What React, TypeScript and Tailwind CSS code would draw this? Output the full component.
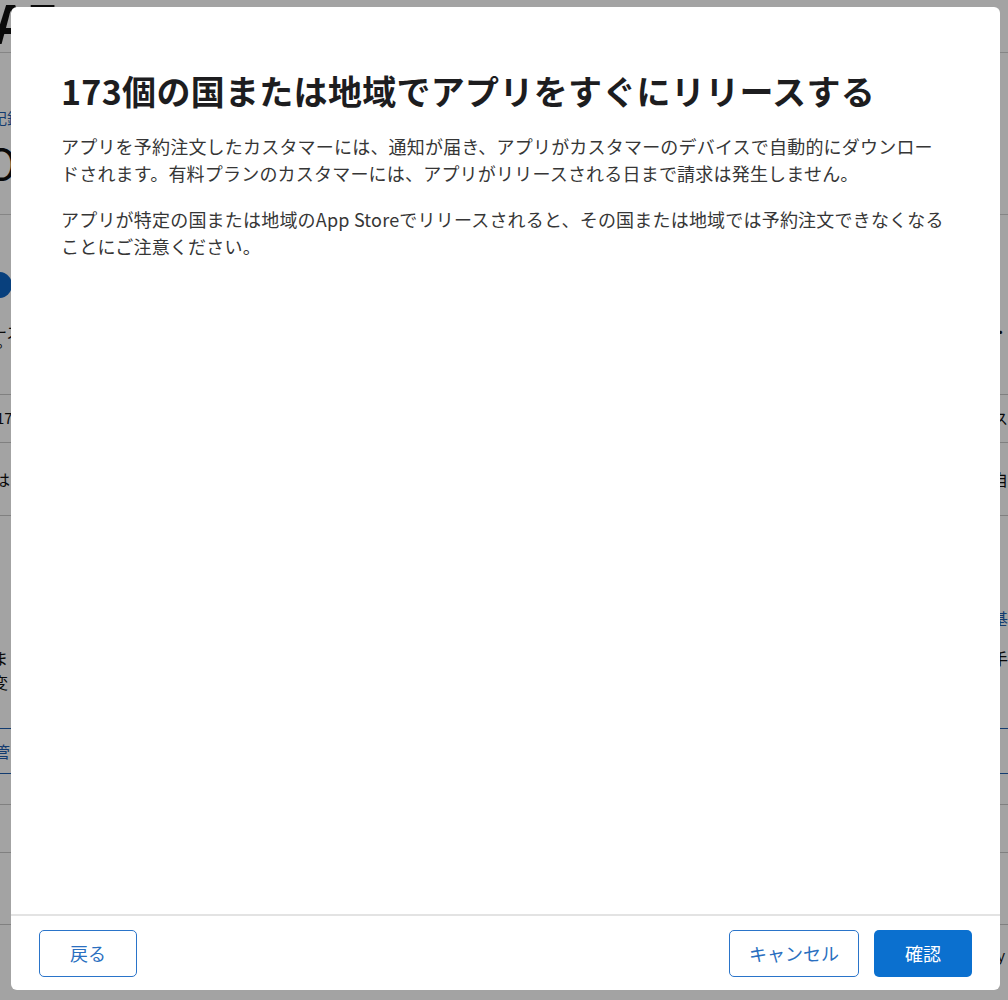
import React from "react";

const FONT = "font-['Noto_Sans_CJK_JP','Noto_Sans',sans-serif]";

function BgPage() {
  return (
    <div className="flex w-[1008px] flex-col bg-white text-[#111]">
      <div className="flex h-[53px] items-end justify-between border-b border-[#d0d0d0]">
        <div className="-mt-[20px] -ml-[6px] text-[52px] font-bold leading-[60px] tracking-tight">AF</div>
      </div>
      <div className="flex h-[162px] flex-col border-b border-[#d0d0d0]">
        <div className="mt-[56px] -ml-[8px] text-[15px] leading-[18px] text-[#1f5fb0]">記録</div>
        <div className="mt-[12px] -ml-[14px] text-[42px] leading-[46px]">O</div>
      </div>
      <div className="flex h-[179px] flex-col">
        <div className="mt-[57px] -ml-[14px] h-[26px] w-[26px] rounded-full bg-[#0d64c4]" />
        <div className="mt-[26px] flex justify-between">
          <span className="-ml-[8px] text-[15px] leading-[16px]">ース</span>
          <span className="text-[15px] leading-[16px]">・</span>
        </div>
        <div className="mt-[2px] -ml-[4px] text-[10px] leading-[12px] tracking-[3px]">P I</div>
      </div>
      <div className="flex h-[49px] items-center justify-between border-t border-b border-[#c8c8c8]">
        <span className="-ml-[4px] text-[15px]">17</span>
        <span className="text-[15px]">ス</span>
      </div>
      <div className="flex h-[73px] items-center justify-between border-b border-[#c8c8c8]">
        <span className="-ml-[6px] text-[16px]">は</span>
        <span className="text-[16px]">自</span>
      </div>
      <div className="flex h-[212px] flex-col">
        <div className="mt-[90px] flex justify-end">
          <span className="text-[16px] text-[#1f5fb0]">基</span>
        </div>
        <div className="mt-[16px] flex justify-between">
          <span className="-ml-[8px] text-[16px] leading-[24px]">ま</span>
          <span className="text-[16px] leading-[24px]">手</span>
        </div>
        <div className="-ml-[8px] text-[16px] leading-[24px]">変</div>
      </div>
      <div className="flex h-[46px] items-center border-y border-[#1f5fb0]">
        <span className="-ml-[6px] text-[16px] text-[#1f5fb0]">管</span>
      </div>
      <div className="h-[31px] border-b border-[#c8c8c8]" />
      <div className="h-[48px] border-b border-[#c8c8c8]" />
      <div className="h-[72px] border-b border-[#c8c8c8]" />
      <div className="flex h-[75px] justify-end">
        <span className="mt-[20px] text-[14px]">ｙ</span>
      </div>
    </div>
  );
}

export default function App() {
  return (
    <div className={`relative h-[1000px] w-[1008px] overflow-hidden ${FONT}`}>
      <BgPage />
      <div className="absolute inset-0 bg-black/[0.36]" />
      <div className="absolute left-[11px] top-[7px] flex h-[983px] w-[989px] flex-col rounded-[6px] bg-white">
        <div className="flex flex-1 flex-col pl-[50px] pr-[30px] pt-[64px]">
          <h1 className="text-[34px] font-bold leading-[40px] tracking-[0.3px] text-[#1d1d1f]">
            173個の国または地域でアプリをすぐにリリースする
          </h1>
          <p className="mt-[22px] text-[18px] leading-[27px] tracking-[0.2px] text-[#363636]">
            アプリを予約注文したカスタマーには、通知が届き、アプリがカスタマーのデバイスで自動的にダウンロー
            <br />
            ドされます。有料プランのカスタマーには、アプリがリリースされる日まで請求は発生しません。
          </p>
          <p className="mt-[19px] text-[18px] leading-[27px] tracking-[0.2px] text-[#363636]">
            アプリが特定の国または地域のApp Storeでリリースされると、その国または地域では予約注文できなくなる
            <br />
            ことにご注意ください。
          </p>
        </div>
        <div className="h-[2px] bg-[#e3e3e3]" />
        <div className="flex items-center justify-between px-[28px] pb-[13px] pt-[14px]">
          <button className="flex h-[47px] w-[98px] items-center justify-center rounded-[5px] border border-[#2a74c9] text-[18px] text-[#2a6fc0]">
            戻る
          </button>
          <div className="flex gap-[15px]">
            <button className="flex h-[47px] w-[130px] items-center justify-center rounded-[5px] border border-[#2a74c9] text-[18px] text-[#2a6fc0]">
              キャンセル
            </button>
            <button className="flex h-[47px] w-[98px] items-center justify-center rounded-[5px] bg-[#0b70cf] text-[18px] text-white">
              確認
            </button>
          </div>
        </div>
      </div>
    </div>
  );
}
